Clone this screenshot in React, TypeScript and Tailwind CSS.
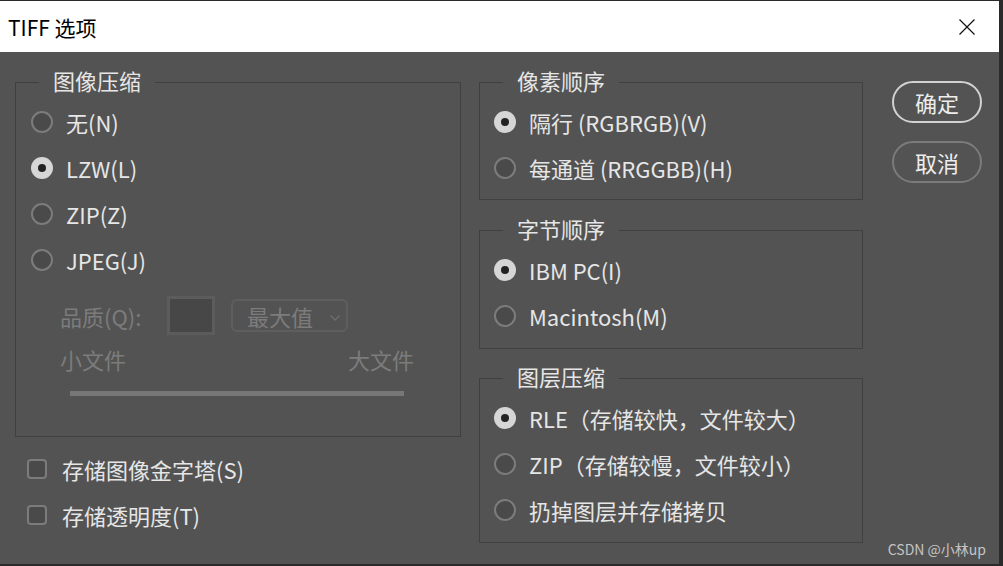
import type { ReactNode } from "react";

const font = "font-['Noto_Sans_CJK_SC','Noto_Sans',sans-serif]";

function Radio({ checked }: { checked?: boolean }) {
  if (checked) {
    return (
      <span className="flex h-[22px] w-[22px] shrink-0 items-center justify-center rounded-full bg-[#d6d6d6]">
        <span className="h-[8px] w-[8px] rounded-full bg-[#232323]" />
      </span>
    );
  }
  return (
    <span className="h-[22px] w-[22px] shrink-0 rounded-full border-2 border-[#7c7c7c] bg-[#4a4a4a]" />
  );
}

function RadioRow({ label, checked }: { label: string; checked?: boolean }) {
  return (
    <div className="flex h-[46px] items-center gap-[13px]">
      <Radio checked={checked} />
      <span className="whitespace-pre text-[22px] leading-[24px] text-[#e6e6e6]">
        {label}
      </span>
    </div>
  );
}

function Check({ label }: { label: string }) {
  return (
    <div className="flex h-[46px] items-center gap-[15px]">
      <span className="h-5 w-5 shrink-0 rounded-[4px] border-2 border-[#7c7c7c] bg-[#4a4a4a]" />
      <span className="text-[22px] leading-[24px] text-[#e6e6e6]">{label}</span>
    </div>
  );
}

function Group({
  title,
  className,
  children,
}: {
  title: string;
  className?: string;
  children: ReactNode;
}) {
  return (
    <fieldset className={"border border-[#404040] " + (className ?? "")}>
      <legend className="ml-[23px] px-[14px] pb-[4px] text-[22px] leading-[20px] text-[#e6e6e6]">
        {title}
      </legend>
      {children}
    </fieldset>
  );
}

export default function App() {
  return (
    <div className={"relative h-[566px] w-[1003px] overflow-hidden bg-[#2a2a2a] pt-[1px] " + font}>
      <div className="flex h-[563px] w-[999px] flex-col bg-[#535353]">
        {/* title bar */}
        <div className="flex h-[51px] items-center justify-between bg-white pl-[8px] pr-[24px]">
          <span className="text-[21px] leading-[24px] text-black">TIFF 选项</span>
          <svg width="16" height="16" viewBox="0 0 16 16" className="mt-[1px]">
            <path d="M0.5 0.5 L15.5 15.5 M15.5 0.5 L0.5 15.5" stroke="#111" strokeWidth="1.2" />
          </svg>
        </div>

        <div className="flex pl-[15px] pt-[18px]">
          {/* left column */}
          <div className="flex w-[446px] flex-col">
            <Group title="图像压缩" className="pb-[40px]">
              <div className="pl-[15px] pt-[5px]">
                <RadioRow label="无(N)" />
                <RadioRow label="LZW(L)" checked />
                <RadioRow label="ZIP(Z)" />
                <RadioRow label="JPEG(J)" />
              </div>
              <div className="ml-[44px] w-[354px] text-[#7c7c7c]">
                <div className="mt-[13px] flex h-[39px] items-center">
                  <span className="w-[107px] text-[22px] leading-[24px]">品质(Q):</span>
                  <span className="h-[39px] w-[48px] border-[3px] border-[#5c5c5c] bg-[#474747]" />
                  <div className="ml-[16px] flex h-[33px] w-[117px] items-center justify-between rounded-[6px] border-2 border-[#5e5e5e] pl-[14px] pr-[6px]">
                    <span className="text-[22px] leading-[24px]">最大值</span>
                    <svg width="10" height="6" viewBox="0 0 10 6" className="mt-[4px]">
                      <path d="M0.5 0.5 L5 5 L9.5 0.5" fill="none" stroke="#6e6e6e" strokeWidth="1.3" />
                    </svg>
                  </div>
                </div>
                <div className="mt-[12px] flex h-[24px] items-center justify-between text-[22px] leading-[24px]">
                  <span>小文件</span>
                  <span>大文件</span>
                </div>
                <div className="mx-[10px] mt-[20px] h-[5px] bg-[#777777]" />
              </div>
            </Group>
            <div className="pl-[12px] pt-[9px]">
              <Check label="存储图像金字塔(S)" />
              <Check label="存储透明度(T)" />
            </div>
          </div>

          {/* right column */}
          <div className="ml-[18px] flex w-[384px] flex-col">
            <Group title="像素顺序" className="pb-[8px]">
              <div className="pl-[14px] pt-[5px]">
                <RadioRow label="隔行 (RGBRGB)(V)" checked />
                <RadioRow label="每通道 (RRGGBB)(H)" />
              </div>
            </Group>
            <Group title="字节顺序" className="mt-[18px] pb-[9px]">
              <div className="pl-[14px] pt-[5px]">
                <RadioRow label="IBM PC(I)" checked />
                <RadioRow label="Macintosh(M)" />
              </div>
            </Group>
            <Group title="图层压缩" className="mt-[17px] pb-[9px]">
              <div className="pl-[14px] pt-[5px]">
                <RadioRow label="RLE（存储较快，文件较大）" checked />
                <RadioRow label="ZIP（存储较慢，文件较小）" />
                <RadioRow label="扔掉图层并存储拷贝" />
              </div>
            </Group>
          </div>

          {/* buttons */}
          <div className="ml-[29px] flex flex-col gap-[18px] pt-[11px]">
            <button
              type="button"
              className="h-[42px] w-[90px] rounded-full border-2 border-[#d2d2d2] text-[22px] leading-[24px] text-[#ededed]"
            >
              确定
            </button>
            <button
              type="button"
              className="h-[42px] w-[90px] rounded-full border-2 border-[#7b7b7b] text-[22px] leading-[24px] text-[#ededed]"
            >
              取消
            </button>
          </div>
        </div>
      </div>
      <span className="absolute bottom-[8px] right-[17px] text-[14px] leading-[18px] text-[#c4c4c4]">
        CSDN @小林up
      </span>
    </div>
  );
}
